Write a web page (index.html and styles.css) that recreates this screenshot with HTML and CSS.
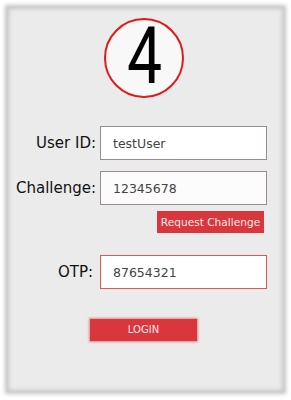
FILE: index.html
```html
<!DOCTYPE html>
<html>
<head>
<meta charset="utf-8">
<link rel="stylesheet" href="styles.css">
</head>
<body>
<div class="panel">
  <div class="badge"><span class="digit">4</span></div>
  <form class="form">
    <label class="label">User ID:</label>
    <input class="field" type="text" value="testUser">
    <label class="label">Challenge:</label>
    <input class="field field-alt" type="text" value="12345678">
    <div class="req-row"><button type="button" class="btn-req">Request Challenge</button></div>
    <label class="label label-otp">OTP:</label>
    <input class="field field-otp" type="text" value="87654321">
  </form>
  <div class="login-row"><button type="button" class="btn-login">LOGIN</button></div>
</div>
</body>
</html>
```
FILE: styles.css
```css
html, body {
  margin: 0;
  padding: 0;
  background: #ffffff;
}
body {
  font-family: "DejaVu Sans", sans-serif;
}
.panel {
  margin: 7px;
  width: 277px;
  height: 385px;
  box-sizing: border-box;
  background: #ebebeb;
  box-shadow: 0 0 4px 2px #c4c4c4, inset 0 0 4px 2px #c8c8c8;
  padding-top: 11px;
}
.badge {
  width: 80px;
  height: 80px;
  box-sizing: border-box;
  border: 2px solid #e2191b;
  border-radius: 50%;
  background: #f8f8f8;
  margin-left: 97px;
  display: flex;
  align-items: center;
  justify-content: center;
}
.digit {
  font-family: "Roboto", sans-serif;
  font-weight: 400;
  font-size: 80px;
  line-height: 1;
  color: #000;
  display: inline-block;
  transform: scaleX(0.78);
  margin-top: -4px;
}
.form {
  margin: 28px 0 0 0;
  display: grid;
  grid-template-columns: 89px 167px;
  column-gap: 4px;
  row-gap: 11px;
  align-items: center;
}
.label {
  font-size: 15px;
  color: #111;
  text-align: right;
}
.label-otp {
  padding-right: 3px;
}
.field {
  box-sizing: border-box;
  height: 34px;
  width: 167px;
  border: 1.5px solid #9a8c8c;
  background: #ffffff;
  padding: 0 0 0 12px;
  margin: 0;
  font-family: "DejaVu Sans", sans-serif;
  font-size: 12.5px;
  color: #444;
  outline: none;
}
.field-alt {
  background: #fcfcfc;
}
.field-otp {
  border-color: #e05555;
}
.req-row {
  grid-column: 2;
  display: flex;
  justify-content: flex-end;
  padding-right: 3px;
  margin-top: -5px;
  margin-bottom: 11px;
}
.btn-req {
  height: 22px;
  width: 107px;
  background: #d9363e;
  color: #fbe9e9;
  border: none;
  padding: 0;
  margin: 0;
  font-family: "DejaVu Sans", sans-serif;
  font-size: 10.6px;
}
.login-row {
  margin-top: 29px;
  padding-left: 83px;
}
.btn-login {
  width: 107px;
  height: 22px;
  background: #d9363e;
  color: #fbe9e9;
  border: none;
  padding: 0;
  margin: 0;
  box-shadow: 0 0 2px 1px rgba(217, 54, 62, 0.55);
  font-family: "DejaVu Sans", sans-serif;
  font-size: 10px;
}
```
